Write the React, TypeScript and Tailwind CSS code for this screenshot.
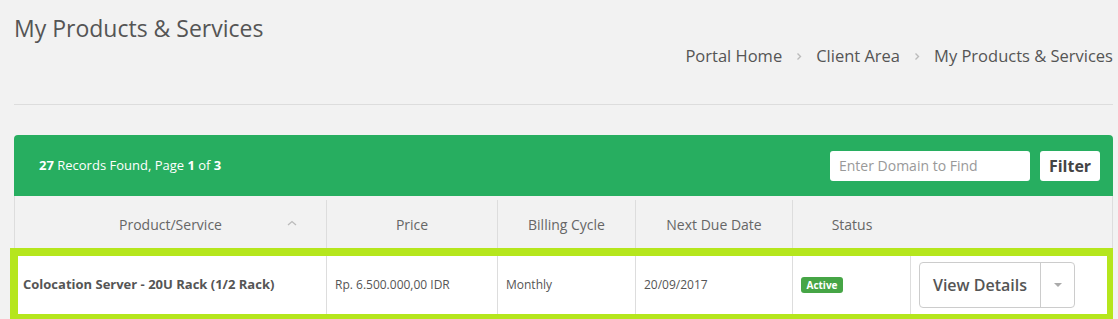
import React from 'react'

const Chevron: React.FC = () => (
  <svg width="6" height="9" viewBox="0 0 6 9" className="mx-[14px]">
    <path d="M1.5 1.5 L4.5 4.5 L1.5 7.5" fill="none" stroke="#bbbbbb" strokeWidth="1.4" />
  </svg>
)

export default function App() {
  const headers = [
    { label: 'Product/Service', w: 'w-[312px] border-r', sort: true },
    { label: 'Price', w: 'w-[171px] border-r' },
    { label: 'Billing Cycle', w: 'w-[138px] border-r' },
    { label: 'Next Due Date', w: 'w-[157px] border-r' },
    { label: 'Status', w: 'w-[118px]' },
  ]

  return (
    <div className="min-h-[319px] bg-[#f2f2f2] pl-[14px] pr-[5px] font-['Open_Sans',sans-serif] text-[#555]">
      {/* Page header */}
      <div className="flex h-[105px] items-start justify-between border-b border-[#dddddd]">
        <h1 className="pt-[12px] text-[23px] leading-[32px] font-normal text-[#555]">
          My Products &amp; Services
        </h1>
        <nav className="flex items-center pt-[44px] text-[16.5px] leading-[24px] text-[#555]">
          <span>Portal Home</span>
          <Chevron />
          <span>Client Area</span>
          <Chevron />
          <span>My Products &amp; Services</span>
        </nav>
      </div>

      {/* Table panel */}
      <div className="mt-[30px]">
        <div className="flex h-[61px] items-center justify-between rounded-t-[4px] bg-[#27ae60] pl-[25px] pr-[13px] text-white">
          <div className="text-[13px]">
            <b className="font-bold">27</b> Records Found, Page <b className="font-bold">1</b> of <b className="font-bold">3</b>
          </div>
          <div className="flex items-center gap-[10px]">
            <input
              className="h-[30px] w-[200px] rounded-[3px] bg-white px-[9px] text-[14px] text-[#555] placeholder:text-[#999] outline-none"
              placeholder="Enter Domain to Find"
            />
            <button className="h-[30px] w-[60px] rounded-[3px] bg-white text-[16px] font-bold text-[#444]">
              Filter
            </button>
          </div>
        </div>

        {/* Column headers */}
        <div className="flex h-[52px] border-x border-[#dddddd] bg-[#f2f2f2] pt-[4px] text-[14px] text-[#666]">
          {headers.map((h) => (
            <div key={h.label} className={`${h.w} relative flex items-center justify-center border-[#dddddd]`}>
              {h.label}
              {h.sort && (
                <svg width="10" height="6" viewBox="0 0 10 6" className="absolute left-[272px] top-[20px]">
                  <path d="M1 5 L5 1.5 L9 5" fill="none" stroke="#bbbbbb" strokeWidth="1.3" />
                </svg>
              )}
            </div>
          ))}
          <div className="flex-1" />
        </div>

        {/* Highlighted data row */}
        <div className="-ml-[4px] flex h-[74px] border-t-8 border-r-[6px] border-b-8 border-l-8 border-[#b5e61d] bg-white text-[12px] text-[#555]">
          <div className="flex w-[309px] items-center border-r border-[#dddddd] pl-[5px] text-[13px] font-bold">
            Colocation Server - 20U Rack (1/2 Rack)
          </div>
          <div className="flex w-[171px] items-center border-r border-[#dddddd] pl-[8px]">Rp. 6.500.000,00 IDR</div>
          <div className="flex w-[138px] items-center border-r border-[#dddddd] pl-[8px]">Monthly</div>
          <div className="flex w-[157px] items-center border-r border-[#dddddd] pl-[8px]">20/09/2017</div>
          <div className="flex w-[118px] items-center border-r border-[#dddddd] pl-[8px]">
            <span className="flex h-[16px] w-[42px] items-center justify-center rounded-[3px] bg-[#46a546] text-[10px] font-bold text-white">
              Active
            </span>
          </div>
          <div className="flex flex-1 items-center pl-[8px]">
            <div className="flex h-[46px] w-[156px] rounded-[4px] border border-[#cccccc] bg-white">
              <div className="flex w-[121px] items-center justify-center border-r border-[#cccccc] text-[16px] font-semibold text-[#555]">
                View Details
              </div>
              <div className="flex flex-1 items-center justify-center">
                <svg width="8" height="4" viewBox="0 0 8 4">
                  <path d="M0 0 L8 0 L4 4 Z" fill="#aaaaaa" />
                </svg>
              </div>
            </div>
          </div>
        </div>
      </div>
    </div>
  )
}
